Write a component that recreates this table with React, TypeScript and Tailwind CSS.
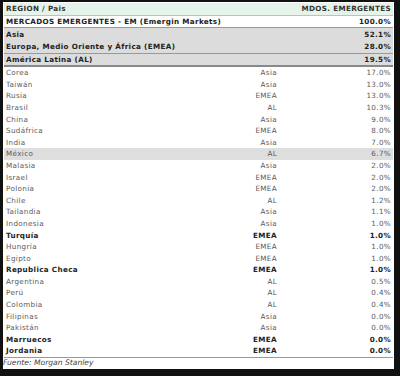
import React from 'react';

type Row = { name: string; region: string; pct: string; bold?: boolean; shade?: boolean };

const rows: Row[] = [
  { name: 'Corea', region: 'Asia', pct: '17.0%' },
  { name: 'Taiwán', region: 'Asia', pct: '13.0%' },
  { name: 'Rusia', region: 'EMEA', pct: '13.0%' },
  { name: 'Brasil', region: 'AL', pct: '10.3%' },
  { name: 'China', region: 'Asia', pct: '9.0%' },
  { name: 'Sudáfrica', region: 'EMEA', pct: '8.0%' },
  { name: 'India', region: 'Asia', pct: '7.0%' },
  { name: 'México', region: 'AL', pct: '6.7%', shade: true },
  { name: 'Malasia', region: 'Asia', pct: '2.0%' },
  { name: 'Israel', region: 'EMEA', pct: '2.0%' },
  { name: 'Polonia', region: 'EMEA', pct: '2.0%' },
  { name: 'Chile', region: 'AL', pct: '1.2%' },
  { name: 'Tailandia', region: 'Asia', pct: '1.1%' },
  { name: 'Indonesia', region: 'Asia', pct: '1.0%' },
  { name: 'Turquía', region: 'EMEA', pct: '1.0%', bold: true },
  { name: 'Hungría', region: 'EMEA', pct: '1.0%' },
  { name: 'Egipto', region: 'EMEA', pct: '1.0%' },
  { name: 'Republica Checa', region: 'EMEA', pct: '1.0%', bold: true },
  { name: 'Argentina', region: 'AL', pct: '0.5%' },
  { name: 'Perú', region: 'AL', pct: '0.4%' },
  { name: 'Colombia', region: 'AL', pct: '0.4%' },
  { name: 'Filipinas', region: 'Asia', pct: '0.0%' },
  { name: 'Pakistán', region: 'Asia', pct: '0.0%' },
  { name: 'Marruecos', region: 'EMEA', pct: '0.0%', bold: true },
  { name: 'Jordania', region: 'EMEA', pct: '0.0%', bold: true },
];

const font = { fontFamily: '"DejaVu Sans", Verdana, sans-serif' };

const App = () => {
  return (
    <div className="w-[400px] h-[376px] bg-[#111] pl-[3px] pt-[2px]" style={font}>
      <div className="w-[391px] h-[367px] bg-white flex flex-col text-[7.2px] tracking-[0.35px] leading-none">
        {/* cabecera */}
        <div className="h-[13px] mt-[1px] ml-[1px] mr-[1px] bg-[#e6f3ea] border-b border-[#b8c4bc] flex items-center font-bold text-[#333] px-[2px]">
          <span className="flex-1">REGION / Pais</span>
          <span>MDOS. EMERGENTES</span>
        </div>
        <div className="h-[12px] ml-[1px] mr-[1px] border-b border-[#999] flex items-center font-bold text-[#222] px-[2px]">
          <span className="flex-1">MERCADOS EMERGENTES - EM (Emergin Markets)</span>
          <span>100.0%</span>
        </div>
        <div className="ml-[1px] mr-[1px] bg-[#dcdcdc] border-b border-[#999]">
          <div className="h-[12.5px] flex items-center font-bold text-[#222] px-[2px]">
            <span className="flex-1">Asia</span>
            <span>52.1%</span>
          </div>
          <div className="h-[12.5px] flex items-center font-bold text-[#222] px-[2px]">
            <span className="flex-1">Europa, Medio Oriente y África (EMEA)</span>
            <span>28.0%</span>
          </div>
        </div>
        <div className="h-[13px] ml-[1px] mr-[1px] bg-[#dcdcdc] border-b-2 border-[#888] flex items-center font-bold text-[#222] px-[2px]">
          <span className="flex-1">América Latina (AL)</span>
          <span>19.5%</span>
        </div>
        <div className="ml-[1px] mr-[1px] border-b border-[#999]">
          {rows.map((r) => (
            <div
              key={r.name}
              className={`h-[11.6px] flex items-center px-[2px] ${r.shade ? 'bg-[#dedede]' : ''} ${
                r.bold ? 'font-bold text-[#222]' : 'text-[#5a5a5a]'
              }`}
            >
              <span className="flex-1">{r.name}</span>
              <span className="w-[60px] text-right">{r.region}</span>
              <span className="w-[114px] text-right">{r.pct}</span>
            </div>
          ))}
        </div>
        <div className="italic text-[#444] text-[7.6px] tracking-normal leading-[9px]">Fuente: Morgan Stanley</div>
      </div>
    </div>
  );
};

export default App;
